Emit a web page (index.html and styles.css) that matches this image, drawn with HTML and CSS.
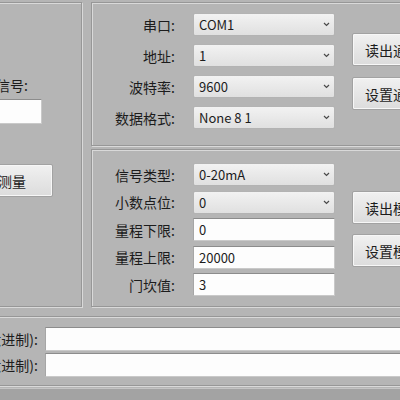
FILE: index.html
```html
<!DOCTYPE html>
<html>
<head>
<meta charset="utf-8">
<link rel="stylesheet" href="styles.css">
</head>
<body>
<div class="dlg">
  <div class="top">
    <div class="grp grp-left">
      <div class="lbl-sig">模拟信号:</div>
      <div class="tb tb-sig"></div>
      <div class="btn btn-measure">开始测量</div>
    </div>
    <div class="rcol">
      <div class="grp grp-comm">
        <div class="form form-comm">
          <div class="row"><span class="lbl">串口:</span><div class="combo"><span>COM1</span><svg class="chev" width="7" height="5" viewBox="0 0 7 5"><path d="M1 1 L3.5 3.5 L6 1" fill="none" stroke="#4a4a4a" stroke-width="1.2"/></svg></div></div>
          <div class="row"><span class="lbl">地址:</span><div class="combo"><span>1</span><svg class="chev" width="7" height="5" viewBox="0 0 7 5"><path d="M1 1 L3.5 3.5 L6 1" fill="none" stroke="#4a4a4a" stroke-width="1.2"/></svg></div></div>
          <div class="row"><span class="lbl">波特率:</span><div class="combo"><span>9600</span><svg class="chev" width="7" height="5" viewBox="0 0 7 5"><path d="M1 1 L3.5 3.5 L6 1" fill="none" stroke="#4a4a4a" stroke-width="1.2"/></svg></div></div>
          <div class="row"><span class="lbl">数据格式:</span><div class="combo"><span>None 8 1</span><svg class="chev" width="7" height="5" viewBox="0 0 7 5"><path d="M1 1 L3.5 3.5 L6 1" fill="none" stroke="#4a4a4a" stroke-width="1.2"/></svg></div></div>
        </div>
        <div class="btns btns-comm">
          <div class="btn">读出通讯参数</div>
          <div class="btn">设置通讯参数</div>
        </div>
      </div>
      <div class="grp grp-mod">
        <div class="form form-mod">
          <div class="row"><span class="lbl">信号类型:</span><div class="combo"><span>0-20mA</span><svg class="chev" width="7" height="5" viewBox="0 0 7 5"><path d="M1 1 L3.5 3.5 L6 1" fill="none" stroke="#4a4a4a" stroke-width="1.2"/></svg></div></div>
          <div class="row"><span class="lbl">小数点位:</span><div class="combo"><span>0</span><svg class="chev" width="7" height="5" viewBox="0 0 7 5"><path d="M1 1 L3.5 3.5 L6 1" fill="none" stroke="#4a4a4a" stroke-width="1.2"/></svg></div></div>
          <div class="row"><span class="lbl">量程下限:</span><div class="tb tb-val">0</div></div>
          <div class="row"><span class="lbl">量程上限:</span><div class="tb tb-val">20000</div></div>
          <div class="row"><span class="lbl">门坎值:</span><div class="tb tb-val">3</div></div>
        </div>
        <div class="btns btns-mod">
          <div class="btn">读出模块参数</div>
          <div class="btn">设置模块参数</div>
        </div>
      </div>
    </div>
  </div>
  <div class="grp grp-bottom">
    <div class="brow"><span class="blbl">发送数据(十六进制):</span><div class="tb tb-long"></div></div>
    <div class="brow"><span class="blbl">接收数据(十六进制):</span><div class="tb tb-long"></div></div>
  </div>
</div>
<div class="status"></div>
</body>
</html>
```

FILE: styles.css
```css
html, body {
  margin: 0;
  padding: 0;
}
body {
  width: 400px;
  height: 400px;
  overflow: hidden;
  background: #b5b5b5;
  color: #1c1c1c;
  font-family: "Noto Sans CJK SC", "Microsoft YaHei", sans-serif;
  font-size: 13px;
}
.dlg {
  margin-left: -100px;
  width: 720px;
  padding-top: 2px;
}
.top {
  display: flex;
  gap: 9px;
  padding-left: 2px;
}
.grp {
  box-sizing: border-box;
  flex-shrink: 0;
  border: 1px solid #979797;
  box-shadow: inset 1px 1px 0 #d9d9d9, 1px 1px 0 #d9d9d9;
}
.grp-left {
  width: 180px;
  height: 305px;
  display: flex;
  flex-direction: column;
  align-items: flex-start;
}
.lbl-sig {
  margin-top: 73px;
  width: 125px;
  text-align: right;
  font-size: 14px;
  line-height: 18px;
}
.tb {
  box-sizing: border-box;
  flex-shrink: 0;
  background: #fdfdfd;
  border: 1px solid #c9c9c9;
  border-top-color: #8c8c8c;
  border-left-color: #a6a6a6;
}
.tb-sig {
  margin-top: 5px;
  margin-left: 19px;
  width: 120px;
  height: 25px;
}
.btn {
  box-sizing: border-box;
  flex-shrink: 0;
  width: 110px;
  height: 33px;
  border: 1px solid #a2a2a2;
  border-radius: 2px;
  background: linear-gradient(#f1f1f1, #e6e6e6 50%, #dcdcdc);
  display: flex;
  align-items: center;
  justify-content: center;
  font-size: 14px;
  white-space: nowrap;
  box-shadow: inset 0 0 0 1px #f7f7f7;
}
.btn-measure {
  margin-top: 40px;
  margin-left: 40px;
}
.rcol {
  flex-shrink: 0;
  display: flex;
  flex-direction: column;
  gap: 3px;
  width: 520px;
}
.grp-comm {
  height: 144px;
  display: flex;
  align-items: flex-start;
}
.grp-mod {
  height: 158px;
  display: flex;
  align-items: flex-start;
}
.form {
  flex-shrink: 0;
  display: flex;
  flex-direction: column;
}
.form-comm {
  padding-top: 10px;
  gap: 8px;
}
.form-mod {
  padding-top: 13px;
  gap: 4.5px;
}
.row {
  display: flex;
  align-items: center;
  height: 23px;
}
.lbl {
  flex-shrink: 0;
  width: 83px;
  text-align: right;
  margin-right: 18px;
  font-size: 14px;
  white-space: nowrap;
}
.combo {
  box-sizing: border-box;
  flex-shrink: 0;
  width: 142px;
  height: 23px;
  border: 1px solid #b3b3b3;
  border-radius: 2px;
  background: linear-gradient(#f2f2f2, #e9e9e9 50%, #e0e0e0);
  display: flex;
  align-items: center;
  justify-content: space-between;
  padding: 0 4px 0 5px;
}
.chev {
  display: block;
}
.tb-val {
  width: 142px;
  height: 23px;
  display: flex;
  align-items: center;
  padding-left: 5px;
}
.btns {
  flex-shrink: 0;
  display: flex;
  flex-direction: column;
  margin-left: 17px;
}
.btns-comm {
  margin-top: 30px;
  gap: 11px;
}
.btns-mod {
  margin-top: 41px;
  gap: 10px;
}
.grp-bottom {
  margin-top: 9px;
  margin-left: 2px;
  width: 618px;
  height: 70px;
  padding-top: 10px;
  display: flex;
  flex-direction: column;
  gap: 2px;
}
.brow {
  display: flex;
  align-items: center;
  height: 24px;
}
.blbl {
  flex-shrink: 0;
  width: 135px;
  text-align: right;
  margin-right: 7px;
  font-size: 14px;
  white-space: nowrap;
}
.tb-long {
  width: 470px;
  height: 24px;
}
.status {
  margin-top: 2px;
  height: 12px;
  background: #a3a3a3;
  border-top: 1px solid #c4c4c4;
}
```
